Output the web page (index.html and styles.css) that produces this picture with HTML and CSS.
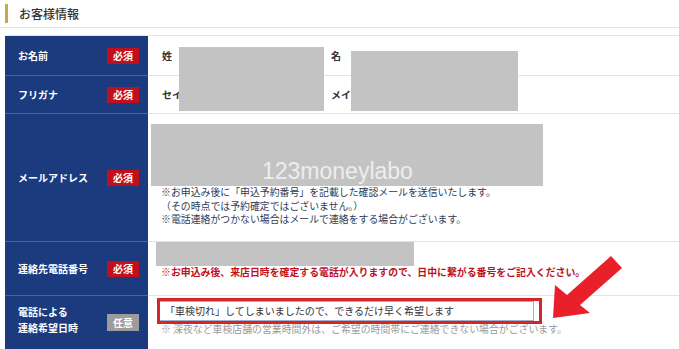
FILE: index.html
```html
<!DOCTYPE html>
<html lang="ja">
<head>
<meta charset="utf-8">
<title>お客様情報</title>
<link rel="stylesheet" href="styles.css">
</head>
<body>
<div class="page">
  <h2 class="heading"><span class="heading-text">お客様情報</span></h2>
  <div class="form">
    <div class="row row-name">
      <div class="label"><span class="label-text">お名前</span><span class="badge req">必須</span></div>
      <div class="field field-pair"><span class="pair-a">姓</span><span class="pair-b">名</span></div>
    </div>
    <div class="row row-kana">
      <div class="label"><span class="label-text">フリガナ</span><span class="badge req">必須</span></div>
      <div class="field field-pair"><span class="pair-a">セイ</span><span class="pair-b">メイ</span></div>
    </div>
    <div class="row row-mail">
      <div class="label"><span class="label-text">メールアドレス</span><span class="badge req">必須</span></div>
      <div class="field field-mail">
        <div class="redact redact-mail"><span class="watermark">123moneylabo</span></div>
        <p class="note">※お申込み後に「申込予約番号」を記載した確認メールを送信いたします。</p>
        <p class="note">（その時点では予約確定ではございません。）</p>
        <p class="note">※電話連絡がつかない場合はメールで連絡をする場合がございます。</p>
      </div>
    </div>
    <div class="row row-tel">
      <div class="label"><span class="label-text">連絡先電話番号</span><span class="badge req">必須</span></div>
      <div class="field field-tel">
        <div class="redact redact-tel"></div>
        <p class="note note-red">※お申込み後、来店日時を確定する電話が入りますので、日中に繋がる番号をご記入ください。</p>
      </div>
    </div>
    <div class="row row-time">
      <div class="label label-top"><span class="label-text">電話による<br>連絡希望日時</span><span class="badge opt">任意</span></div>
      <div class="field field-time">
        <div class="input">「車検切れ」してしまいましたので、できるだけ早く希望します</div>
        <p class="note note-grey">※ 深夜など車検店舗の営業時間外は、ご希望の時間帯にご連絡できない場合がございます。</p>
      </div>
    </div>
  </div>
  <div class="redact redact-sei"></div>
  <div class="redact redact-mei"></div>
  <svg class="annot" width="679" height="349" viewBox="0 0 679 349" xmlns="http://www.w3.org/2000/svg">
    <rect x="158.5" y="299.5" width="382" height="23" fill="none" stroke="#d6242b" stroke-width="3"/>
    <polygon points="553,318 555,285 567,295 611,256 622,268 580,305 590,313" fill="#e8202a"/>
  </svg>
</div>
</body>
</html>
```

FILE: styles.css
```css
* {
  box-sizing: border-box;
}

html,
body {
  margin: 0;
  padding: 0;
  background: #ffffff;
}

body {
  font-family: "Noto Sans CJK JP", "Noto Sans", sans-serif;
  color: #333333;
}

.page {
  position: relative;
  width: 679px;
  height: 349px;
  overflow: hidden;
}

.heading {
  margin: 0 0 7px;
  padding: 4px 0 4px 5px;
  height: 28px;
  border-bottom: 1px solid #e4e4e4;
  font-size: 12px;
  font-weight: 500;
  line-height: 19px;
  color: #333333;
}

.heading-text {
  display: block;
  border-left: 3px solid #cba651;
  padding-left: 11px;
}

.form {
  margin-left: 5px;
  border-top: 1px solid #e4e4e4;
}

.row {
  display: grid;
  grid-template-columns: 143px 1fr;
}

.row-name { height: 40px; }
.row-kana { height: 38px; }
.row-mail { height: 128px; }
.row-tel { height: 54px; }
.row-time { height: 60px; }

.label {
  display: flex;
  align-items: center;
  justify-content: space-between;
  padding: 0 9px 0 13px;
  background: #1c3a7e;
  color: #ffffff;
  font-size: 10px;
  font-weight: bold;
  line-height: 17px;
  border-bottom: 1px solid #46629f;
}

.label-top {
  align-items: flex-start;
  padding-top: 8px;
  line-height: 16px;
}

.badge {
  width: 32px;
  height: 16px;
  font-size: 10px;
  line-height: 16px;
  text-align: center;
  font-weight: bold;
  color: #ffffff;
}

.req {
  background: #c20f1d;
}

.opt {
  background: #9c9c9c;
  height: 17px;
  line-height: 17px;
  margin-top: 10px;
}

.field {
  border-bottom: 1px solid #e4e4e4;
}

.field-pair {
  display: flex;
  align-items: center;
  padding-left: 14px;
  font-size: 10px;
  font-weight: bold;
  color: #333333;
}

.pair-a {
  width: 169px;
}

.redact {
  background: #c3c3c3;
}

.field-mail {
  padding-top: 10px;
}

.redact-mail {
  display: flex;
  align-items: flex-end;
  margin-left: 3px;
  width: 392px;
  height: 62px;
  padding: 0 0 3px 111px;
}

.watermark {
  font-family: "Liberation Sans", Arial, sans-serif;
  font-size: 23px;
  line-height: 23px;
  color: #ededed;
}

.note {
  margin: 0 0 0 13px;
  font-size: 9.9px;
  line-height: 13.5px;
  color: #2f3b56;
  white-space: nowrap;
}

.redact-tel {
  margin-left: 8px;
  width: 258px;
  height: 24px;
}

.note-red {
  line-height: 13px;
  color: #c0101c;
  font-weight: bold;
}

.field-time {
  padding-top: 5px;
}

.input {
  margin-left: 11px;
  width: 375px;
  height: 20px;
  border: 1px solid #9fb0c8;
  padding-left: 5px;
  font-size: 10px;
  line-height: 18px;
  color: #333333;
  white-space: nowrap;
}

.note-grey {
  margin-top: 1px;
  line-height: 14px;
  color: #9a9a9a;
}

.redact-sei {
  position: absolute;
  left: 179px;
  top: 47px;
  width: 145px;
  height: 64px;
}

.redact-mei {
  position: absolute;
  left: 351px;
  top: 51px;
  width: 167px;
  height: 60px;
}

.annot {
  position: absolute;
  left: 0;
  top: 0;
  pointer-events: none;
}
```
